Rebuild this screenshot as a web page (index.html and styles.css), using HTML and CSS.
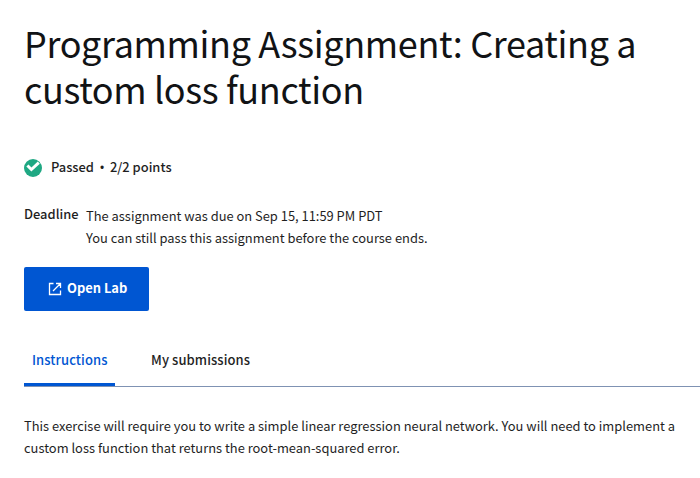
FILE: index.html
```html
<!DOCTYPE html>
<html lang="en">
<head>
<meta charset="utf-8">
<title>Programming Assignment</title>
<link rel="stylesheet" href="styles.css">
</head>
<body>
<main class="page">
  <h1 class="title">Programming Assignment: Creating a<br>custom loss function</h1>
  <div class="status">
    <svg class="status-icon" viewBox="0 0 18 18"><circle cx="9" cy="9" r="9" fill="#1fa883"/><path d="M3.4 6.5l4 4L14.8 3.6" fill="none" stroke="#fff" stroke-width="3"/></svg>
    <span class="status-text"><span>Passed</span><span class="dot">•</span><span>2/2 points</span></span>
  </div>
  <div class="deadline">
    <span class="deadline-label">Deadline</span>
    <div class="deadline-text"><p>The assignment was due on Sep 15, 11:59 PM PDT</p><p>You can still pass this assignment before the course ends.</p></div>
  </div>
  <button class="open-lab"><svg class="open-icon" viewBox="0 0 14 14"><path d="M5.5 1.5h-4v11h11v-4M8 1.5h4.5V6M12.5 1.5L5 9" fill="none" stroke="#fff" stroke-width="1.3"/></svg><span class="open-text">Open Lab</span></button>
  <nav class="tabs"><a class="tab active">Instructions</a><a class="tab">My submissions</a></nav>
  <p class="body">This exercise will require you to write a simple linear regression neural network. You will need to implement a<br>custom loss function that returns the root-mean-squared error.</p>
</main>
</body>
</html>
```
FILE: styles.css
```css
* { box-sizing: border-box; }
body { margin: 0; background: #fff; color: #1f1f1f; font: 12.9px/22px "Noto Sans CJK SC", sans-serif; overflow: hidden; }
p { margin: 0; }
.page { padding: 19px 0 0 24px; white-space: nowrap; }
.title { margin: 0; font-size: 36px; line-height: 46px; font-weight: 400; letter-spacing: -0.36px; color: #111315; }
.status { display: flex; align-items: center; gap: 9px; margin-top: 45px; height: 22px; font-weight: 500; }
.status-icon { width: 18px; height: 18px; margin-top: 1px; }
.status-text { display: flex; }
.dot { width: 16px; text-align: center; font-family: "Open Sans", sans-serif; font-size: 15px; }
.deadline { display: flex; gap: 7px; margin-top: 27px; }
.deadline-label { width: 55px; font-weight: 500; margin-top: -2px; }
.open-lab { display: flex; align-items: center; gap: 5px; width: 125px; height: 44px; margin-top: 18px; padding: 0 0 0 24px; border: 0; border-radius: 2px; background: #0056d2; color: #fff; font: 700 12.9px/22px "Noto Sans CJK SC", sans-serif; }
.open-icon { width: 14px; height: 14px; }
.open-text { padding-bottom: 2px; }
.tabs { display: flex; gap: 28px; height: 51px; margin-top: 25px; border-bottom: 1px solid #7f92b3; }
.tab { height: 50px; padding: 13px 8px 0; font-weight: 500; font-size: 13px; letter-spacing: 0.09px; }
.active { width: 91px; color: #0056d2; border-bottom: 3px solid #0056d2; }
.body { margin-top: 28px; }
```
